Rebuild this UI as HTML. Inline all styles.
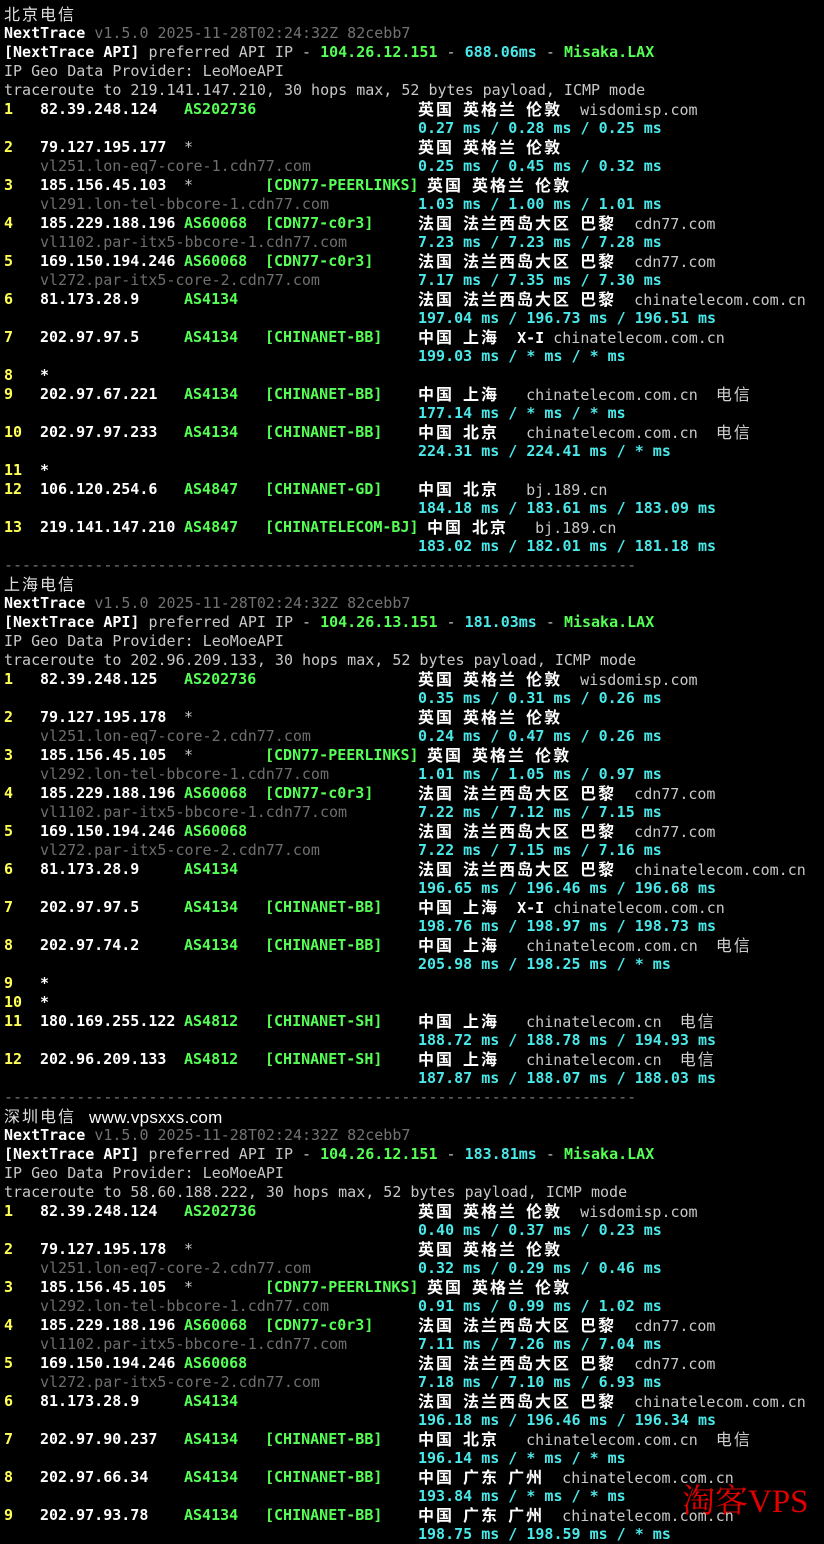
<!DOCTYPE html>
<html><head><meta charset="utf-8">
<style>
html,body{margin:0;padding:0;background:#000;}
body{width:824px;height:1534px;overflow:hidden;position:relative;font-family:"DejaVu Sans Mono","Noto Sans CJK SC",monospace;font-size:15px;color:#c8c8c8;}
#t{position:absolute;top:5px;left:0;width:824px;}
.l{position:relative;height:19px;line-height:19px;white-space:pre;}
i{position:absolute;top:0;font-style:normal;white-space:pre;}
.p0{left:4px}.p4{left:40px}.p20{left:184px}.p29{left:265px}.p46{left:418px}.p47{left:427px}
b{font-weight:bold;letter-spacing:2px;font-size:16px;color:#fff}
em{font-style:normal;letter-spacing:2px;font-size:16px;color:#d0d0d0}
.t{letter-spacing:2px;font-size:16px;color:#e0e0e0}
.w{font-weight:bold;color:#fff}
.y{font-weight:bold;color:#ffff55}
.g{font-weight:bold;color:#55ff55}
.c{font-weight:bold;color:#4ae8e8}
.h{color:#6e6e6e}
.v{color:#727272}
.sep{color:#7a7a7a}
#www{position:absolute;left:89px;top:1108px;font-family:"Liberation Sans",sans-serif;font-size:17px;color:#fff;letter-spacing:0.3px}
#wm{position:absolute;left:682px;top:1482px;font-family:"Liberation Serif","Noto Serif CJK SC",serif;font-size:33px;color:#e00000;line-height:40px}
</style></head><body>
<div id="t">
<div class="l"><i class="p0 t">北京电信</i></div>
<div class="l"><i class="p0"><span class="w">NextTrace</span> <span class="v">v1.5.0 2025-11-28T02:24:32Z 82cebb7</span></i></div>
<div class="l"><i class="p0"><span class="w">[NextTrace API]</span> preferred API IP - <span class="g">104.26.12.151</span> - <span class="c">688.06ms</span> - <span class="g">Misaka.LAX</span></i></div>
<div class="l"><i class="p0">IP Geo Data Provider: LeoMoeAPI</i></div>
<div class="l"><i class="p0">traceroute to 219.141.147.210, 30 hops max, 52 bytes payload, ICMP mode</i></div>
<div class="l"><i class="p0 y">1</i><i class="p4 w">82.39.248.124</i><i class="p20 g">AS202736</i><i class="p46"><b>英国</b> <b>英格兰</b> <b>伦敦</b>  wisdomisp.com</i></div>
<div class="l"><i class="p46 c">0.27 ms / 0.28 ms / 0.25 ms</i></div>
<div class="l"><i class="p0 y">2</i><i class="p4 w">79.127.195.177</i><i class="p20">*</i><i class="p46"><b>英国</b> <b>英格兰</b> <b>伦敦</b></i></div>
<div class="l"><i class="p4 h">vl251.lon-eq7-core-1.cdn77.com</i><i class="p46 c">0.25 ms / 0.45 ms / 0.32 ms</i></div>
<div class="l"><i class="p0 y">3</i><i class="p4 w">185.156.45.103</i><i class="p20">*</i><i class="p29 g">[CDN77-PEERLINKS]</i><i class="p47"><b>英国</b> <b>英格兰</b> <b>伦敦</b></i></div>
<div class="l"><i class="p4 h">vl291.lon-tel-bbcore-1.cdn77.com</i><i class="p46 c">1.03 ms / 1.00 ms / 1.01 ms</i></div>
<div class="l"><i class="p0 y">4</i><i class="p4 w">185.229.188.196</i><i class="p20 g">AS60068</i><i class="p29 g">[CDN77-c0r3]</i><i class="p46"><b>法国</b> <b>法兰西岛大区</b> <b>巴黎</b>  cdn77.com</i></div>
<div class="l"><i class="p4 h">vl1102.par-itx5-bbcore-1.cdn77.com</i><i class="p46 c">7.23 ms / 7.23 ms / 7.28 ms</i></div>
<div class="l"><i class="p0 y">5</i><i class="p4 w">169.150.194.246</i><i class="p20 g">AS60068</i><i class="p29 g">[CDN77-c0r3]</i><i class="p46"><b>法国</b> <b>法兰西岛大区</b> <b>巴黎</b>  cdn77.com</i></div>
<div class="l"><i class="p4 h">vl272.par-itx5-core-2.cdn77.com</i><i class="p46 c">7.17 ms / 7.35 ms / 7.30 ms</i></div>
<div class="l"><i class="p0 y">6</i><i class="p4 w">81.173.28.9</i><i class="p20 g">AS4134</i><i class="p46"><b>法国</b> <b>法兰西岛大区</b> <b>巴黎</b>  chinatelecom.com.cn</i></div>
<div class="l"><i class="p46 c">197.04 ms / 196.73 ms / 196.51 ms</i></div>
<div class="l"><i class="p0 y">7</i><i class="p4 w">202.97.97.5</i><i class="p20 g">AS4134</i><i class="p29 g">[CHINANET-BB]</i><i class="p46"><b>中国</b> <b>上海</b>  <span class="w">X-I</span> chinatelecom.com.cn</i></div>
<div class="l"><i class="p46 c">199.03 ms / * ms / * ms</i></div>
<div class="l"><i class="p0 y">8</i><i class="p4 w">*</i></div>
<div class="l"><i class="p0 y">9</i><i class="p4 w">202.97.67.221</i><i class="p20 g">AS4134</i><i class="p29 g">[CHINANET-BB]</i><i class="p46"><b>中国</b> <b>上海</b>   chinatelecom.com.cn  <em>电信</em></i></div>
<div class="l"><i class="p46 c">177.14 ms / * ms / * ms</i></div>
<div class="l"><i class="p0 y">10</i><i class="p4 w">202.97.97.233</i><i class="p20 g">AS4134</i><i class="p29 g">[CHINANET-BB]</i><i class="p46"><b>中国</b> <b>北京</b>   chinatelecom.com.cn  <em>电信</em></i></div>
<div class="l"><i class="p46 c">224.31 ms / 224.41 ms / * ms</i></div>
<div class="l"><i class="p0 y">11</i><i class="p4 w">*</i></div>
<div class="l"><i class="p0 y">12</i><i class="p4 w">106.120.254.6</i><i class="p20 g">AS4847</i><i class="p29 g">[CHINANET-GD]</i><i class="p46"><b>中国</b> <b>北京</b>   bj.189.cn</i></div>
<div class="l"><i class="p46 c">184.18 ms / 183.61 ms / 183.09 ms</i></div>
<div class="l"><i class="p0 y">13</i><i class="p4 w">219.141.147.210</i><i class="p20 g">AS4847</i><i class="p29 g">[CHINATELECOM-BJ]</i><i class="p47"><b>中国</b> <b>北京</b>   bj.189.cn</i></div>
<div class="l"><i class="p46 c">183.02 ms / 182.01 ms / 181.18 ms</i></div>
<div class="l"><i class="p0 sep">----------------------------------------------------------------------</i></div>

<div class="l"><i class="p0 t">上海电信</i></div>
<div class="l"><i class="p0"><span class="w">NextTrace</span> <span class="v">v1.5.0 2025-11-28T02:24:32Z 82cebb7</span></i></div>
<div class="l"><i class="p0"><span class="w">[NextTrace API]</span> preferred API IP - <span class="g">104.26.13.151</span> - <span class="c">181.03ms</span> - <span class="g">Misaka.LAX</span></i></div>
<div class="l"><i class="p0">IP Geo Data Provider: LeoMoeAPI</i></div>
<div class="l"><i class="p0">traceroute to 202.96.209.133, 30 hops max, 52 bytes payload, ICMP mode</i></div>
<div class="l"><i class="p0 y">1</i><i class="p4 w">82.39.248.125</i><i class="p20 g">AS202736</i><i class="p46"><b>英国</b> <b>英格兰</b> <b>伦敦</b>  wisdomisp.com</i></div>
<div class="l"><i class="p46 c">0.35 ms / 0.31 ms / 0.26 ms</i></div>
<div class="l"><i class="p0 y">2</i><i class="p4 w">79.127.195.178</i><i class="p20">*</i><i class="p46"><b>英国</b> <b>英格兰</b> <b>伦敦</b></i></div>
<div class="l"><i class="p4 h">vl251.lon-eq7-core-2.cdn77.com</i><i class="p46 c">0.24 ms / 0.47 ms / 0.26 ms</i></div>
<div class="l"><i class="p0 y">3</i><i class="p4 w">185.156.45.105</i><i class="p20">*</i><i class="p29 g">[CDN77-PEERLINKS]</i><i class="p47"><b>英国</b> <b>英格兰</b> <b>伦敦</b></i></div>
<div class="l"><i class="p4 h">vl292.lon-tel-bbcore-1.cdn77.com</i><i class="p46 c">1.01 ms / 1.05 ms / 0.97 ms</i></div>
<div class="l"><i class="p0 y">4</i><i class="p4 w">185.229.188.196</i><i class="p20 g">AS60068</i><i class="p29 g">[CDN77-c0r3]</i><i class="p46"><b>法国</b> <b>法兰西岛大区</b> <b>巴黎</b>  cdn77.com</i></div>
<div class="l"><i class="p4 h">vl1102.par-itx5-bbcore-1.cdn77.com</i><i class="p46 c">7.22 ms / 7.12 ms / 7.15 ms</i></div>
<div class="l"><i class="p0 y">5</i><i class="p4 w">169.150.194.246</i><i class="p20 g">AS60068</i><i class="p46"><b>法国</b> <b>法兰西岛大区</b> <b>巴黎</b>  cdn77.com</i></div>
<div class="l"><i class="p4 h">vl272.par-itx5-core-2.cdn77.com</i><i class="p46 c">7.22 ms / 7.15 ms / 7.16 ms</i></div>
<div class="l"><i class="p0 y">6</i><i class="p4 w">81.173.28.9</i><i class="p20 g">AS4134</i><i class="p46"><b>法国</b> <b>法兰西岛大区</b> <b>巴黎</b>  chinatelecom.com.cn</i></div>
<div class="l"><i class="p46 c">196.65 ms / 196.46 ms / 196.68 ms</i></div>
<div class="l"><i class="p0 y">7</i><i class="p4 w">202.97.97.5</i><i class="p20 g">AS4134</i><i class="p29 g">[CHINANET-BB]</i><i class="p46"><b>中国</b> <b>上海</b>  <span class="w">X-I</span> chinatelecom.com.cn</i></div>
<div class="l"><i class="p46 c">198.76 ms / 198.97 ms / 198.73 ms</i></div>
<div class="l"><i class="p0 y">8</i><i class="p4 w">202.97.74.2</i><i class="p20 g">AS4134</i><i class="p29 g">[CHINANET-BB]</i><i class="p46"><b>中国</b> <b>上海</b>   chinatelecom.com.cn  <em>电信</em></i></div>
<div class="l"><i class="p46 c">205.98 ms / 198.25 ms / * ms</i></div>
<div class="l"><i class="p0 y">9</i><i class="p4 w">*</i></div>
<div class="l"><i class="p0 y">10</i><i class="p4 w">*</i></div>
<div class="l"><i class="p0 y">11</i><i class="p4 w">180.169.255.122</i><i class="p20 g">AS4812</i><i class="p29 g">[CHINANET-SH]</i><i class="p46"><b>中国</b> <b>上海</b>   chinatelecom.cn  <em>电信</em></i></div>
<div class="l"><i class="p46 c">188.72 ms / 188.78 ms / 194.93 ms</i></div>
<div class="l"><i class="p0 y">12</i><i class="p4 w">202.96.209.133</i><i class="p20 g">AS4812</i><i class="p29 g">[CHINANET-SH]</i><i class="p46"><b>中国</b> <b>上海</b>   chinatelecom.cn  <em>电信</em></i></div>
<div class="l"><i class="p46 c">187.87 ms / 188.07 ms / 188.03 ms</i></div>
<div class="l"><i class="p0 sep">----------------------------------------------------------------------</i></div>

<div class="l"><i class="p0 t">深圳电信</i></div>
<div class="l"><i class="p0"><span class="w">NextTrace</span> <span class="v">v1.5.0 2025-11-28T02:24:32Z 82cebb7</span></i></div>
<div class="l"><i class="p0"><span class="w">[NextTrace API]</span> preferred API IP - <span class="g">104.26.12.151</span> - <span class="c">183.81ms</span> - <span class="g">Misaka.LAX</span></i></div>
<div class="l"><i class="p0">IP Geo Data Provider: LeoMoeAPI</i></div>
<div class="l"><i class="p0">traceroute to 58.60.188.222, 30 hops max, 52 bytes payload, ICMP mode</i></div>
<div class="l"><i class="p0 y">1</i><i class="p4 w">82.39.248.124</i><i class="p20 g">AS202736</i><i class="p46"><b>英国</b> <b>英格兰</b> <b>伦敦</b>  wisdomisp.com</i></div>
<div class="l"><i class="p46 c">0.40 ms / 0.37 ms / 0.23 ms</i></div>
<div class="l"><i class="p0 y">2</i><i class="p4 w">79.127.195.178</i><i class="p20">*</i><i class="p46"><b>英国</b> <b>英格兰</b> <b>伦敦</b></i></div>
<div class="l"><i class="p4 h">vl251.lon-eq7-core-2.cdn77.com</i><i class="p46 c">0.32 ms / 0.29 ms / 0.46 ms</i></div>
<div class="l"><i class="p0 y">3</i><i class="p4 w">185.156.45.105</i><i class="p20">*</i><i class="p29 g">[CDN77-PEERLINKS]</i><i class="p47"><b>英国</b> <b>英格兰</b> <b>伦敦</b></i></div>
<div class="l"><i class="p4 h">vl292.lon-tel-bbcore-1.cdn77.com</i><i class="p46 c">0.91 ms / 0.99 ms / 1.02 ms</i></div>
<div class="l"><i class="p0 y">4</i><i class="p4 w">185.229.188.196</i><i class="p20 g">AS60068</i><i class="p29 g">[CDN77-c0r3]</i><i class="p46"><b>法国</b> <b>法兰西岛大区</b> <b>巴黎</b>  cdn77.com</i></div>
<div class="l"><i class="p4 h">vl1102.par-itx5-bbcore-1.cdn77.com</i><i class="p46 c">7.11 ms / 7.26 ms / 7.04 ms</i></div>
<div class="l"><i class="p0 y">5</i><i class="p4 w">169.150.194.246</i><i class="p20 g">AS60068</i><i class="p46"><b>法国</b> <b>法兰西岛大区</b> <b>巴黎</b>  cdn77.com</i></div>
<div class="l"><i class="p4 h">vl272.par-itx5-core-2.cdn77.com</i><i class="p46 c">7.18 ms / 7.10 ms / 6.93 ms</i></div>
<div class="l"><i class="p0 y">6</i><i class="p4 w">81.173.28.9</i><i class="p20 g">AS4134</i><i class="p46"><b>法国</b> <b>法兰西岛大区</b> <b>巴黎</b>  chinatelecom.com.cn</i></div>
<div class="l"><i class="p46 c">196.18 ms / 196.46 ms / 196.34 ms</i></div>
<div class="l"><i class="p0 y">7</i><i class="p4 w">202.97.90.237</i><i class="p20 g">AS4134</i><i class="p29 g">[CHINANET-BB]</i><i class="p46"><b>中国</b> <b>北京</b>   chinatelecom.com.cn  <em>电信</em></i></div>
<div class="l"><i class="p46 c">196.14 ms / * ms / * ms</i></div>
<div class="l"><i class="p0 y">8</i><i class="p4 w">202.97.66.34</i><i class="p20 g">AS4134</i><i class="p29 g">[CHINANET-BB]</i><i class="p46"><b>中国</b> <b>广东</b> <b>广州</b>  chinatelecom.com.cn</i></div>
<div class="l"><i class="p46 c">193.84 ms / * ms / * ms</i></div>
<div class="l"><i class="p0 y">9</i><i class="p4 w">202.97.93.78</i><i class="p20 g">AS4134</i><i class="p29 g">[CHINANET-BB]</i><i class="p46"><b>中国</b> <b>广东</b> <b>广州</b>  chinatelecom.com.cn</i></div>
<div class="l"><i class="p46 c">198.75 ms / 198.59 ms / * ms</i></div>
</div>
<div id="www">www.vpsxxs.com</div>
<div id="wm">淘客VPS</div>
</body></html>
